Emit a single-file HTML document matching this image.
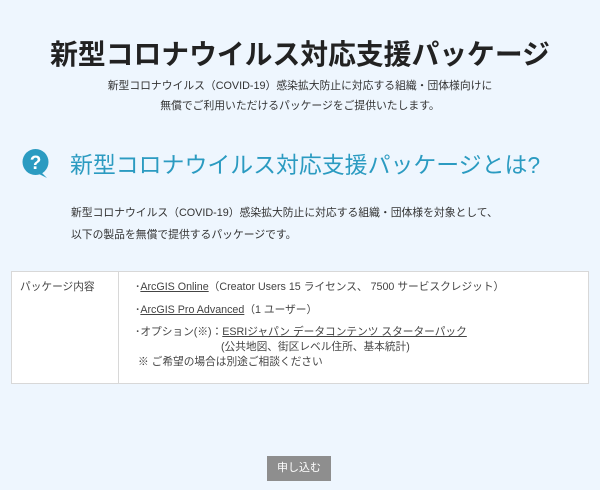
<!DOCTYPE html>
<html><head><meta charset="utf-8"><style>
body{margin:0;width:600px;height:490px;background:#eef6fe;font-family:"Liberation Sans","Noto Sans CJK JP",sans-serif;color:#333;position:relative;overflow:hidden}
.a{position:absolute;white-space:nowrap}
h1{position:absolute;left:0;width:600px;top:33px;margin:0;text-align:center;font-size:27.8px;font-weight:bold;color:#222}
.sub{left:0;width:600px;text-align:center;font-size:10.8px;color:#333}
.h2{left:70px;top:146px;font-size:22.9px;color:#2b9bc1}
.p{left:71px;font-size:10.8px;color:#333}
.tbl{position:absolute;left:11px;top:271px;width:576px;height:111px;border:1px solid #d8d8d8;background:#fff}
.div{position:absolute;left:106px;top:0;bottom:0;border-left:1px solid #d8d8d8}
.t{font-size:10.7px;color:#444}
u{text-decoration:underline}
.btn{position:absolute;left:267px;top:456px;width:64px;height:25px;background:#8e8e8e;color:#fff;font-size:11px;text-align:center;line-height:25px}
</style></head><body>
<h1>新型コロナウイルス対応支援パッケージ</h1>
<div class="a sub" style="top:77px">新型コロナウイルス（COVID-19）感染拡大防止に対応する組織・団体様向けに</div>
<div class="a sub" style="top:97px">無償でご利用いただけるパッケージをご提供いたします。</div>
<svg class="a" style="left:22px;top:148px" width="28" height="32" viewBox="0 0 28 32"><circle cx="13.5" cy="14" r="13" fill="#2b9bc1"/><path d="M19 24 L25 30 L17 26Z" fill="#2b9bc1"/><text x="13.5" y="21" text-anchor="middle" font-family="Liberation Sans" font-weight="bold" font-size="19" fill="#fff">?</text></svg>
<div class="a h2">新型コロナウイルス対応支援パッケージとは?</div>
<div class="a p" style="top:204px">新型コロナウイルス（COVID-19）感染拡大防止に対応する組織・団体様を対象として、</div>
<div class="a p" style="top:226px">以下の製品を無償で提供するパッケージです。</div>
<div class="tbl"><div class="div"></div>
<div class="a t" style="left:8px;top:7px">パッケージ内容</div>
<div class="a t" style="left:123px;top:7px">･<u>ArcGIS Online</u>（Creator Users 15 ライセンス、 7500 サービスクレジット）</div>
<div class="a t" style="left:123px;top:30px">･<u>ArcGIS Pro Advanced</u>（1 ユーザー）</div>
<div class="a t" style="left:123px;top:52px">･オプション(※)：<u>ESRIジャパン データコンテンツ スターターパック</u></div>
<div class="a t" style="left:209px;top:67px">(公共地図、街区レベル住所、基本統計)</div>
<div class="a t" style="left:126px;top:82px">※ ご希望の場合は別途ご相談ください</div>
</div>
<div class="btn">申し込む</div>
</body></html>
